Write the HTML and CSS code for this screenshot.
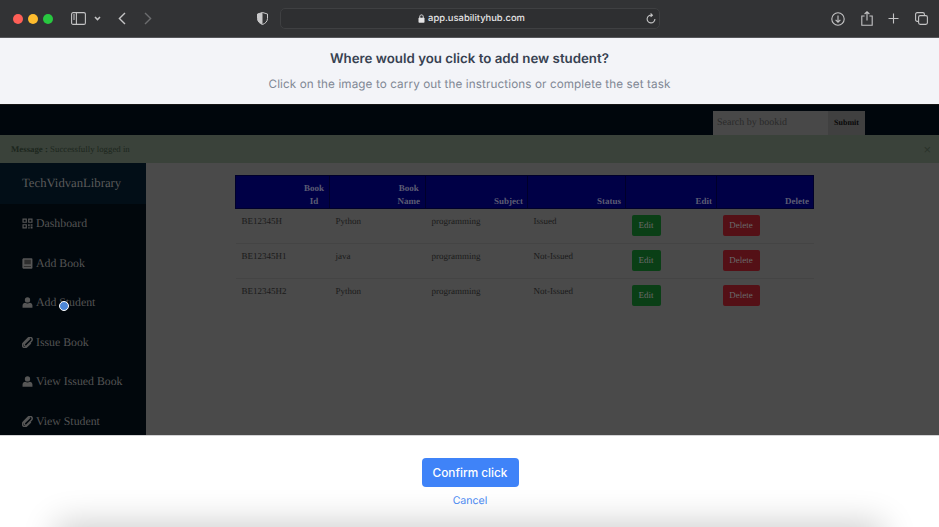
FILE: index.html
```html
<!DOCTYPE html>
<html lang="en">
<head>
    <meta charset="UTF-8">
    <meta name="viewport" content="width=device-width, initial-scale=1.0">
    <title>Click test</title>
    <link rel="stylesheet" href="styles.css">
</head>
<body>
    <svg class="defs" width="0" height="0">
        <symbol id="i-user" viewBox="0 0 12 12"><circle cx="6" cy="3.2" r="2.9"/><path d="M0.6 11.6V9.4C0.6 7.6 2 6.6 3.6 6.4 5 7.2 7 7.2 8.4 6.4 10 6.6 11.4 7.6 11.4 9.4V11.6Z"/></symbol>
        <symbol id="i-clip" viewBox="0 0 12 12"><path d="M8.6 1.6 3 7.2C2.3 8 2.3 9 3 9.6 3.6 10.2 4.6 10.2 5.3 9.5L10.2 4.6C11.4 3.3 11.4 1.9 10.4 1 9.4 0 8 0.1 6.8 1.2L1.7 6.4C0.2 8 0.2 9.7 1.3 10.8 2.4 11.9 4.2 11.8 5.7 10.4L9.6 6.5" fill="none" stroke="currentColor" stroke-width="1.6"/></symbol>
    </svg>

    <div class="toolbar">
        <div class="lights">
            <span class="light red"></span>
            <span class="light yellow"></span>
            <span class="light green"></span>
        </div>
        <svg class="tb-icon sidebar-toggle" width="15" height="13" viewBox="0 0 15 13"><rect x="0.6" y="0.6" width="13.8" height="11.8" rx="1.5"/><path d="M5.4 0.6V12.4M2 3H4M2 5H4M2 7H4"/></svg>
        <svg class="tb-icon chevron" width="7" height="5" viewBox="0 0 7 5"><path d="M1 1 3.5 3.6 6 1" stroke-width="1.5"/></svg>
        <svg class="tb-icon back" width="8" height="13" viewBox="0 0 8 13"><path d="M7 1 1.4 6.5 7 12" stroke-width="1.4"/></svg>
        <svg class="tb-icon forward" width="8" height="13" viewBox="0 0 8 13"><path d="M1 1 6.6 6.5 1 12" stroke-width="1.4"/></svg>
        <svg class="shield" width="11" height="13" viewBox="0 0 11 13"><path d="M5.5 0.5 10.5 2V6.5C10.5 9.5 8.2 11.6 5.5 12.5 2.8 11.6 0.5 9.5 0.5 6.5V2Z" fill="none" stroke="#c9c9ca"/><path d="M5.5 0.5V12.5C2.8 11.6 0.5 9.5 0.5 6.5V2Z" fill="#c9c9ca"/></svg>
        <div class="address">
            <svg class="lock" width="7" height="9" viewBox="0 0 7 9"><rect x="0.5" y="3.7" width="6" height="5" rx="0.8" fill="#e4e4e5"/><path d="M1.8 4V2.4C1.8 0.4 5.2 0.4 5.2 2.4V4" fill="none" stroke="#e4e4e5"/></svg>
            <span>app.usabilityhub.com</span>
            <svg class="tb-icon reload" width="10" height="11" viewBox="0 0 10 11"><path d="M5.8 2.2A3.9 3.9 0 1 0 8.9 6M4.6 0.5 6.4 2.2 4.6 3.9"/></svg>
        </div>
        <div class="tb-right">
            <svg class="tb-icon" width="14" height="14" viewBox="0 0 14 14"><circle cx="7" cy="7" r="6.2"/><path d="M7 3.6V10M4.6 7.8 7 10.2 9.4 7.8"/></svg>
            <svg class="tb-icon" width="12" height="15" viewBox="0 0 12 15"><path d="M3.6 5H0.8V14.2H11.2V5H8.4M6 9.6V0.8M3.6 3 6 0.8 8.4 3"/></svg>
            <svg class="tb-icon" width="11" height="11" viewBox="0 0 11 11"><path d="M5.5 0.5V10.5M0.5 5.5H10.5"/></svg>
            <svg class="tb-icon" width="13" height="13" viewBox="0 0 13 13"><rect x="3.6" y="3.6" width="8.8" height="8.8" rx="1.6"/><path d="M3.6 9.4H2.2C1.2 9.4 0.6 8.8 0.6 7.8V2.2C0.6 1.2 1.2 0.6 2.2 0.6H7.8C8.8 0.6 9.4 1.2 9.4 2.2V3.6"/></svg>
        </div>
    </div>

    <div class="task">
        <h1>Where would you click to add new student?</h1>
        <p>Click on the image to carry out the instructions or complete the set task</p>
    </div>

    <div class="shot">
        <div class="navbar">
            <div class="search">
                <span class="search-input">Search by bookid</span>
                <span class="search-btn">Submit</span>
            </div>
        </div>
        <div class="alert">
            <span><b>Message :</b> Successfully logged in</span>
            <span class="alert-close">&times;</span>
        </div>
        <div class="columns">
            <div class="sidebar">
                <div class="brand">TechVidvanLibrary</div>
                <div class="nav-item">
                    <svg class="nav-icon" viewBox="0 0 12 12"><path d="M0.5 0.5H5.3V5.3H0.5ZM1.8 1.8V4H4V1.8ZM6.7 0.5H11.5V5.3H6.7ZM8 1.8V4H10.2V1.8ZM0.5 6.7H5.3V11.5H0.5ZM1.8 8V10.2H4V8ZM6.7 6.7H8.4V9H6.7ZM9.4 6.7H11.5V8.4H9.4ZM6.7 10H8.4V11.5H6.7ZM9.4 9.4H11.5V11.5H9.4Z" fill-rule="evenodd"/></svg>
                    Dashboard
                </div>
                <div class="nav-item">
                    <svg class="nav-icon" viewBox="0 0 12 12"><path d="M2 0.3H10.4C11 0.3 11.4 0.7 11.4 1.3V10.7C11.4 11.3 11 11.7 10.4 11.7H2C1 11.7 0.4 11 0.4 10V2C0.4 1 1 0.3 2 0.3Z"/><path class="book-page" d="M2.6 1.8H9.6V6.8H2.6ZM2 8.8H9.8V9.9H2Z"/></svg>
                    Add Book
                </div>
                <div class="nav-item"><svg class="nav-icon"><use href="#i-user"/></svg> Add Student</div>
                <div class="nav-item"><svg class="nav-icon"><use href="#i-clip"/></svg> Issue Book</div>
                <div class="nav-item"><svg class="nav-icon"><use href="#i-user"/></svg> View Issued Book</div>
                <div class="nav-item"><svg class="nav-icon"><use href="#i-clip"/></svg> View Student</div>
                <span class="click-dot"></span>
            </div>
            <div class="main">
                <table class="books">
                    <colgroup>
                        <col class="c-id"><col class="c-name"><col class="c-subject"><col class="c-status"><col class="c-edit"><col class="c-delete">
                    </colgroup>
                    <thead>
                        <tr>
                            <th><span class="stack">Book<br>Id</span></th>
                            <th><span class="stack">Book<br>Name</span></th>
                            <th>Subject</th>
                            <th>Status</th>
                            <th>Edit</th>
                            <th>Delete</th>
                        </tr>
                    </thead>
                    <tbody>
                        <tr>
                            <td>BE12345H</td><td>Python</td><td>programming</td><td>Issued</td>
                            <td><span class="btn btn-edit">Edit</span></td>
                            <td><span class="btn btn-delete">Delete</span></td>
                        </tr>
                        <tr>
                            <td>BE12345H1</td><td>java</td><td>programming</td><td>Not-Issued</td>
                            <td><span class="btn btn-edit">Edit</span></td>
                            <td><span class="btn btn-delete">Delete</span></td>
                        </tr>
                        <tr>
                            <td>BE12345H2</td><td>Python</td><td>programming</td><td>Not-Issued</td>
                            <td><span class="btn btn-edit">Edit</span></td>
                            <td><span class="btn btn-delete">Delete</span></td>
                        </tr>
                    </tbody>
                </table>
            </div>
        </div>
    </div>

    <div class="confirm">
        <button class="confirm-btn">Confirm click</button>
        <a class="cancel">Cancel</a>
        <div class="edge-shadow"></div>
    </div>
</body>
</html>
```

FILE: styles.css
```css
body {
    margin: 0;
    width: 939px;
    height: 527px;
    overflow: hidden;
    background: #fff;
    font-family: Inter, "Liberation Sans", sans-serif;
    text-rendering: geometricPrecision;
}

.defs {
    display: block;
    height: 0;
}

/* browser chrome */
.toolbar {
    height: 37px;
    border-bottom: 1px solid #55565a;
    background: #323335;
    display: flex;
    align-items: center;
    box-sizing: content-box;
}

.lights {
    display: flex;
    gap: 5px;
    margin-left: 13px;
}

.light {
    width: 10px;
    height: 10px;
    border-radius: 50%;
}

.red { background: #fe5f57; }
.yellow { background: #febc2e; }
.green { background: #28c840; }

.tb-icon {
    fill: none;
    stroke: #c4c4c5;
    stroke-width: 1.1;
    flex: none;
}

.sidebar-toggle { margin-left: 18px; }
.chevron { margin-left: 8px; }
.back { margin-left: 17px; }
.forward { margin-left: 18px; stroke: #6b6c6e; }

.shield {
    margin-left: 105px;
    flex: none;
}

.address {
    margin-left: 12px;
    width: 380px;
    height: 21px;
    box-sizing: border-box;
    border: 1px solid #3f4042;
    border-radius: 5px;
    background: #2e2f31;
    display: flex;
    align-items: center;
    justify-content: center;
    gap: 3px;
    padding-left: 3px;
    color: #e4e4e5;
    font-size: 9.4px;
    font-weight: 500;
    position: relative;
}

.reload {
    position: absolute;
    right: 3px;
    top: 4px;
}

.tb-right {
    margin-left: 171px;
    display: flex;
    align-items: center;
    gap: 15.5px;
}

/* task text */
.task {
    height: 66px;
    background: #f3f4f8;
    text-align: center;
    box-sizing: border-box;
    padding-top: 13px;
}

.task h1 {
    margin: 0;
    font-size: 13.3px;
    line-height: 17px;
    font-weight: 600;
    color: #374151;
}

.task p {
    margin: 8px 0 0;
    font-size: 11.7px;
    line-height: 17px;
    color: #7f8794;
    letter-spacing: 0.1px;
}

/* dimmed screenshot */
.shot {
    height: 331px;
    overflow: hidden;
    display: flex;
    flex-direction: column;
    font-family: "Liberation Serif", "Times New Roman", serif;
    background: #4a4a4a;
}

.navbar {
    height: 31px;
    flex: none;
    box-sizing: border-box;
    border-top: 1px solid #151515;
    background: #00060c;
    display: flex;
    justify-content: flex-end;
    align-items: flex-end;
    padding-right: 74px;
}

.search {
    display: flex;
    height: 24px;
    font-size: 10px;
}

.search-input {
    width: 115px;
    box-sizing: border-box;
    padding: 6px 0 0 4px;
    background: #484848;
    color: #2a2a2a;
}

.search-btn {
    width: 37px;
    box-sizing: border-box;
    padding-top: 7px;
    text-align: center;
    background: #404040;
    color: #080808;
    font-size: 8px;
    font-weight: 700;
}

.alert {
    height: 28px;
    flex: none;
    box-sizing: border-box;
    background: #3a423a;
    color: #1c261d;
    font-size: 8.8px;
    padding: 0 8px 0 11px;
    display: flex;
    justify-content: space-between;
    align-items: center;
}

.alert-close {
    font-family: "Liberation Sans", sans-serif;
    font-size: 13px;
    color: #2a332a;
}

.columns {
    flex: 1;
    display: flex;
    min-height: 0;
}

.sidebar {
    width: 146px;
    flex: none;
    position: relative;
    background: #01070c;
    color: #545454;
}

.brand {
    height: 41px;
    box-sizing: border-box;
    padding: 12px 0 0 22px;
    background: #020e17;
    font-size: 12.7px;
    line-height: 17px;
    color: #5a5a5a;
}

.nav-item {
    height: 39.5px;
    display: flex;
    align-items: center;
    gap: 3px;
    padding-left: 22px;
    font-size: 11.8px;
}

.nav-icon {
    width: 11px;
    height: 11px;
    fill: #565656;
    color: #565656;
    flex: none;
}

.book-page {
    fill: #2e2e2e;
}

.click-dot {
    position: absolute;
    left: 59px;
    top: 138px;
    width: 8px;
    height: 8px;
    border: 1px solid #fff;
    border-radius: 50%;
    background: #4d87d8;
}

.main {
    flex: 1;
    padding: 12px 125px 0 89px;
}

.books {
    width: 578px;
    table-layout: fixed;
    border-collapse: collapse;
    font-size: 9px;
    color: #1a1a1a;
}

.c-id { width: 94px; }
.c-name { width: 96px; }
.c-subject { width: 102px; }
.c-status { width: 98px; }
.c-edit { width: 91px; }
.c-delete { width: 97px; }

.books th {
    height: 33px;
    box-sizing: border-box;
    padding: 0 4px 1px;
    background: #000046;
    border: 1px solid #00002a;
    color: #5c5c74;
    font-weight: 700;
    line-height: 12.4px;
    text-align: right;
    vertical-align: bottom;
}

.stack {
    display: inline-block;
    text-align: center;
    margin-right: 1px;
}

.books td {
    height: 35px;
    box-sizing: border-box;
    padding: 7px 6px 0;
    border-bottom: 1px solid #444;
    line-height: 11px;
    vertical-align: top;
}

.books tr:last-child td {
    border-bottom: none;
}

.btn {
    display: block;
    margin-top: -1px;
    height: 21px;
    line-height: 21px;
    border-radius: 2px;
    text-align: center;
    color: #6a6a6a;
}

.btn-edit {
    width: 29px;
    background: #0a3f16;
}

.btn-delete {
    width: 37px;
    background: #541016;
}

/* confirm footer */
.confirm {
    height: 92px;
    position: relative;
    overflow: hidden;
    background: #fff;
    display: flex;
    flex-direction: column;
    align-items: center;
    border-top: 1px solid #d4d4d6;
    box-sizing: border-box;
}

.confirm-btn {
    margin: 22px 0 0 1px;
    width: 97px;
    height: 29px;
    border: none;
    border-radius: 4px;
    background: #3f83f8;
    color: #fff;
    font-family: Inter, "Liberation Sans", sans-serif;
    font-size: 11.8px;
    font-weight: 500;
}

.cancel {
    margin: 7px 0 0 1px;
    font-size: 10.6px;
    line-height: 14px;
    color: #4b8bf5;
}

.edge-shadow {
    position: absolute;
    left: 60px;
    right: 60px;
    bottom: -40px;
    height: 40px;
    box-shadow: 0 0 34px 4px rgba(0, 0, 0, 0.2);
}
```
